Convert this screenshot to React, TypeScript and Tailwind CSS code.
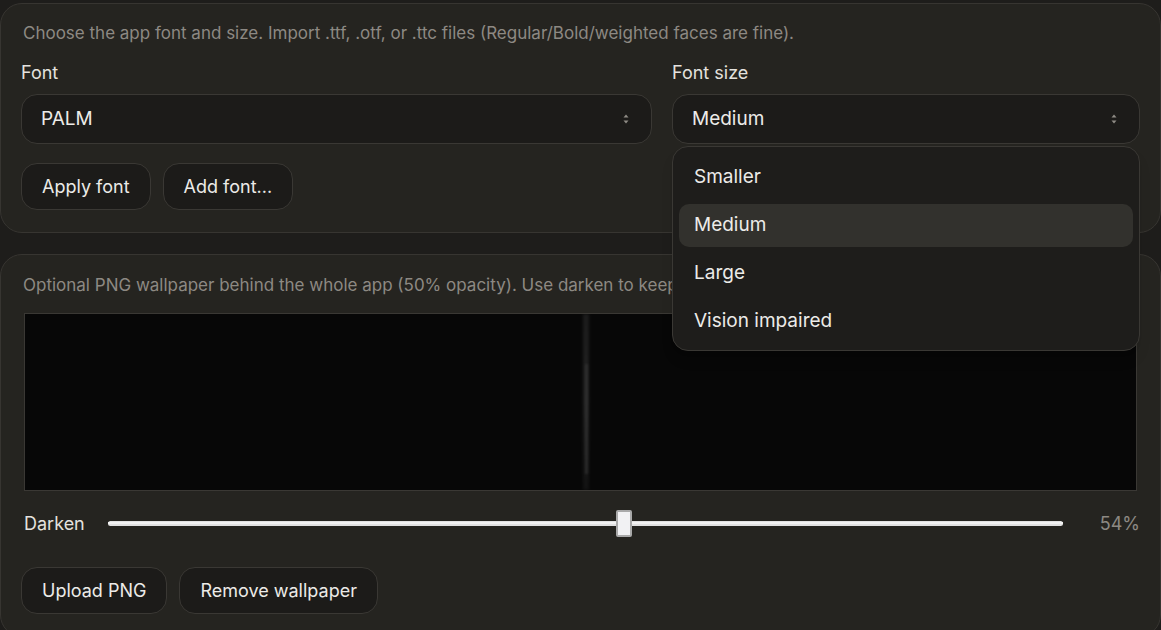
import React from "react";

const sizes = ["Smaller", "Medium", "Large", "Vision impaired"];

function Chevrons() {
  return (
    <svg width="6" height="12" viewBox="0 0 6 12" className="text-[#8f8c86]">
      <path d="M3 1.5 L5.5 4.5 H0.5 Z" fill="currentColor" />
      <path d="M3 10.5 L5.5 7.5 H0.5 Z" fill="currentColor" />
    </svg>
  );
}

function Select({ value }: { value: string }) {
  return (
    <div className="flex h-[50px] items-center justify-between rounded-[16px] border border-[#3a3834] bg-[#1c1b19] pl-[19px] pr-[22px] text-[19px] text-[#ecebe8]">
      <span>{value}</span>
      <Chevrons />
    </div>
  );
}

function Btn({ children }: { children: React.ReactNode }) {
  return (
    <button
      type="button"
      className="h-[47px] rounded-[16px] border border-[#3a3834] bg-[#1c1b19] px-[20px] text-[18px] text-[#ecebe8]"
    >
      {children}
    </button>
  );
}

export default function App() {
  return (
    <div
      className="h-[630px] w-[1161px] overflow-hidden bg-[#1e1d1b] pt-[3px]"
      style={{ fontFamily: "Inter, 'Noto Sans', sans-serif" }}
    >
      {/* Font panel */}
      <section className="relative z-10 rounded-[22px] border border-[#373531] bg-[#252420] px-5 pb-[22px] pt-[17px]">
        <p className="pl-[2px] text-[17px] leading-[24px] text-[#8d8983]">
          Choose the app font and size. Import .ttf, .otf, or .ttc files (Regular/Bold/weighted faces are fine).
        </p>
        <div className="mt-[16px] grid grid-cols-[minmax(0,1fr)_468px] gap-5">
          <div>
            <div className="mb-[9px] text-[18px] leading-[24px] text-[#e4e2de]">Font</div>
            <Select value="PALM" />
          </div>
          <div className="relative">
            <div className="mb-[9px] text-[18px] leading-[24px] text-[#e4e2de]">Font size</div>
            <Select value="Medium" />
            <div className="absolute left-0 right-0 top-[calc(100%+2px)] flex flex-col gap-[5px] rounded-[16px] border border-[#3a3834] bg-[#1e1d1b] px-[6px] pb-[7px] pt-[9px] shadow-lg">
              {sizes.map((s) => (
                <div
                  key={s}
                  className={`flex h-[43px] items-center rounded-[10px] pl-[15px] text-[19px] text-[#ecebe8] ${
                    s === "Medium" ? "bg-[#32312d]" : ""
                  }`}
                >
                  {s}
                </div>
              ))}
            </div>
          </div>
        </div>
        <div className="mt-[19px] flex gap-3">
          <Btn>Apply font</Btn>
          <Btn>Add font...</Btn>
        </div>
      </section>

      {/* Wallpaper panel */}
      <section className="mt-[21px] rounded-[22px] border border-[#373531] bg-[#252420] px-5 pb-[22px] pt-[18px]">
        <p className="max-w-[651px] overflow-hidden whitespace-nowrap pl-[2px] text-[17px] leading-[24px] text-[#8d8983]">
          Optional PNG wallpaper behind the whole app (50% opacity). Use darken to keep text readable.
        </p>
        <div className="relative mx-[3px] mt-[16px] h-[178px] overflow-hidden border border-[#3a3834] bg-[#070707]">
          <div className="absolute left-[558px] top-0 h-full w-[6px] bg-gradient-to-b from-[#2a2a2a] via-[#333] to-[#1a1a1a] opacity-60 blur-[1.5px]" />
          <div className="absolute left-[560px] top-[50px] h-[110px] w-[3px] bg-[#3c3c3c] opacity-50 blur-[1px]" />
        </div>
        <div className="mt-[18px] flex h-[28px] items-center">
          <span className="w-[87px] pl-[3px] text-[18px] text-[#e4e2de]">Darken</span>
          <div className="relative h-[5px] w-[955px] rounded-sm bg-[#e2e2e2]">
            <div className="absolute inset-x-0 top-[1px] h-[2px] bg-[#f2f2f2]" />
            <div className="absolute left-[508px] top-[-11px] h-[27px] w-[16px] rounded-[2px] border-2 border-[#a9a9a9] bg-[#f1f1f3]" />
          </div>
          <span className="ml-auto text-[18px] text-[#8d8983]">54%</span>
        </div>
        <div className="mt-[30px] flex gap-3">
          <Btn>Upload PNG</Btn>
          <Btn>Remove wallpaper</Btn>
        </div>
      </section>
    </div>
  );
}
